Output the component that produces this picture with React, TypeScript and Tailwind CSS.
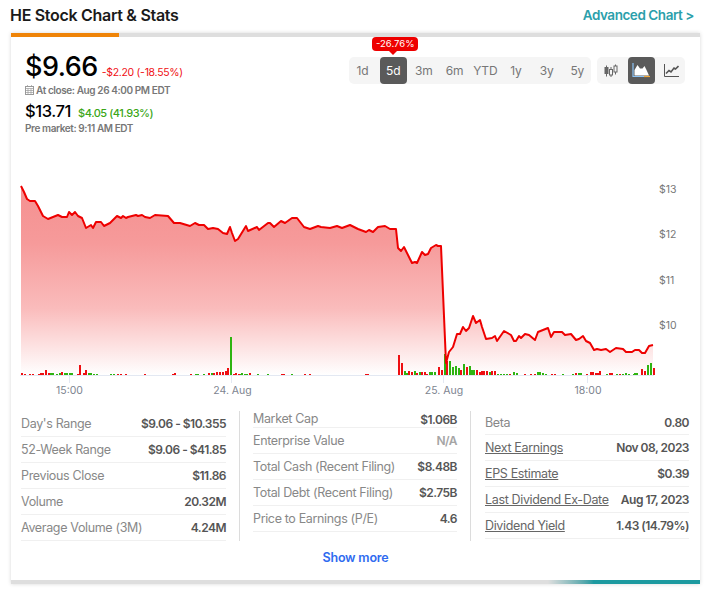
import React from "react";

const linePts =
  "21,186 24,192 27,199 30,201 35,201 38,206 43,216 48,219 53,217 58,215 62,217 67,217 69,212 72,215 75,212 78,216 82,218 86,228 91,225 93,228 96,222 101,222 104,226 110,223 117,216 121,218 123,216 126,218 128,217 136,215 138,216 142,215 145,217 150,218 155,215 168,216 174,223 180,223 190,226 195,223 199,225 204,225 208,229 213,228 218,229 223,233 227,234 230,227 232,233 235,241 238,239 246,226 248,231 257,227 259,230 268,223 270,223 274,227 281,221 285,223 292,218 297,218 304,227 310,229 318,226 321,227 330,228 337,226 342,228 350,225 358,229 366,232 369,230 373,232 378,227 385,226 390,229 396,229 398,248 401,251 404,247 412,263 415,262 417,263 422,252 425,255 428,254 431,248 436,245 438,246 441,246 446,363 449,352 453,347 457,334 460,334 463,327 466,331 469,328 473,316 476,323 480,320 482,327 486,339 492,338 495,336 497,341 504,331 511,335 514,341 516,341 519,336 521,338 525,334 529,335 535,340 538,332 548,328 551,337 554,332 562,332 565,335 571,334 576,340 579,339 583,336 586,341 590,343 594,350 597,349 601,350 606,349 610,352 616,348 623,349 626,352 632,352 635,350 639,350 642,353 645,353 649,346 653,345";

// [x, height, 1 = green]
const volumes: [number, number, number][] = [
  [21, 2, 0], [24, 1, 0], [29, 1, 0], [32, 1, 0], [38, 1, 0], [40, 2, 0], [42, 2, 0], [45, 5, 0], [48, 2, 0], [50, 2, 1], [52, 2, 1],
  [56, 1, 1], [59, 2, 1], [61, 3, 0], [64, 2, 1], [66, 2, 1], [69, 2, 1], [71, 2, 1], [77, 1, 0], [79, 10, 0], [83, 2, 0], [85, 5, 0], [88, 2, 1], [90, 2, 1], [93, 1, 1], [96, 1, 1],
  [110, 1, 1], [113, 1, 1], [117, 1, 0], [120, 1, 0], [125, 1, 0], [144, 1, 0], [172, 1, 0], [174, 2, 0], [190, 1, 0], [195, 1, 1], [197, 1, 1], [203, 1, 1],
  [208, 2, 0], [211, 2, 1], [213, 2, 0], [216, 3, 0], [219, 3, 0], [222, 3, 0], [225, 4, 0], [227, 7, 0], [230, 38, 1], [233, 1, 0], [235, 2, 0], [238, 1, 0],
  [240, 1, 1], [241, 2, 1], [244, 1, 1], [246, 1, 1], [249, 2, 0], [257, 1, 1], [267, 1, 1], [281, 1, 0], [283, 1, 0], [291, 1, 1], [304, 1, 0], [309, 1, 0], [365, 1, 0], [367, 1, 0],
  [398, 20, 0], [401, 12, 0], [404, 4, 1], [406, 2, 1], [408, 4, 0], [411, 3, 0], [414, 4, 1], [416, 2, 0], [419, 3, 1], [421, 3, 0], [424, 3, 0], [426, 1, 0], [429, 3, 1], [431, 3, 1], [434, 3, 1], [438, 8, 0], [441, 5, 0],
  [444, 21, 1], [446, 14, 0], [449, 14, 1], [452, 8, 1], [455, 9, 1], [458, 7, 1], [460, 5, 0], [463, 11, 1], [466, 8, 0], [469, 9, 1],
  [471, 5, 1], [473, 5, 1], [476, 5, 0], [479, 3, 0], [481, 4, 0], [483, 4, 0], [486, 4, 0], [489, 3, 1], [491, 4, 0], [494, 4, 0], [497, 1, 1], [500, 1, 1], [503, 1, 1], [506, 1, 1], [509, 1, 0], [513, 3, 1], [516, 2, 1],
  [524, 1, 0], [530, 1, 0], [534, 1, 0], [537, 3, 1], [539, 3, 1], [542, 2, 1], [545, 1, 1], [551, 1, 0], [554, 1, 0], [562, 1, 1], [572, 1, 1], [575, 2, 0], [578, 2, 1], [580, 2, 1], [586, 1, 0],
  [590, 3, 0], [592, 3, 0], [595, 2, 0], [597, 2, 0], [599, 4, 0], [606, 1, 1], [609, 2, 0], [611, 2, 0], [616, 1, 1], [619, 1, 0], [622, 1, 1], [625, 2, 1], [628, 1, 1], [633, 1, 1], [634, 2, 1], [636, 2, 1],
  [641, 6, 0], [644, 4, 0], [647, 10, 1], [650, 12, 1], [653, 7, 0],
];

type Stat = { label: string; value: string; link?: boolean; muted?: boolean };

const col1: Stat[] = [
  { label: "Day's Range", value: "$9.06 - $10.355" },
  { label: "52-Week Range", value: "$9.06 - $41.85" },
  { label: "Previous Close", value: "$11.86" },
  { label: "Volume", value: "20.32M" },
  { label: "Average Volume (3M)", value: "4.24M" },
];
const col2: Stat[] = [
  { label: "Market Cap", value: "$1.06B" },
  { label: "Enterprise Value", value: "N/A", muted: true },
  { label: "Total Cash (Recent Filing)", value: "$8.48B" },
  { label: "Total Debt (Recent Filing)", value: "$2.75B" },
  { label: "Price to Earnings (P/E)", value: "4.6" },
];
const col3: Stat[] = [
  { label: "Beta", value: "0.80" },
  { label: "Next Earnings", value: "Nov 08, 2023", link: true },
  { label: "EPS Estimate", value: "$0.39", link: true },
  { label: "Last Dividend Ex-Date", value: "Aug 17, 2023", link: true },
  { label: "Dividend Yield", value: "1.43 (14.79%)", link: true },
];

const ranges = ["1d", "5d", "3m", "6m", "YTD", "1y", "3y", "5y"];

function StatRows({ rows, firstRow }: { rows: Stat[]; firstRow: string }) {
  return (
    <>
      {rows.map((row, i) => (
        <div
          key={row.label}
          className={`flex items-center justify-between whitespace-nowrap border-b border-[#f0f0f0] pt-[1px] ${i === 0 ? firstRow : "h-[26px]"}`}
        >
          <span className={`text-[12.5px] tracking-[-0.35px] ${row.link ? "text-[#666] underline" : "text-[#888]"}`}>{row.label}</span>
          <span className={`text-[12px] font-semibold tracking-[-0.5px] ${row.muted ? "text-[#a5a5a5]" : "text-[#555]"}`}>{row.value}</span>
        </div>
      ))}
    </>
  );
}

function CandleIcon({ color }: { color: string }) {
  return (
    <svg width="14" height="14" viewBox="0 0 14 14" fill="none" stroke={color}>
      <path d="M2.5 1.5v11M7 3v10M11.5 0.5v10" strokeWidth="1" />
      <rect x="1" y="3.5" width="3" height="6" fill={color} />
      <rect x="5.5" y="5.5" width="3" height="5.5" fill="#f5f5f5" />
      <rect x="10" y="2" width="3" height="6" fill="#f5f5f5" />
    </svg>
  );
}

function AreaIcon() {
  return (
    <svg width="19" height="15" viewBox="0 0 19 15" fill="none">
      <path d="M2.5 12.5V7L5.5 2l2.5 3.5H10.5L12.5 3l2 4 2.5 5.5z" fill="#fff" />
      <path d="M1 0v13.5h11" stroke="#8cc4f5" strokeWidth="1.2" />
      <path d="M12 13.5h6" stroke="#f0a83c" strokeWidth="1.2" />
    </svg>
  );
}

function LineIcon() {
  return (
    <svg width="15" height="13" viewBox="0 0 15 13" fill="none" stroke="#555">
      <path d="M0.5 0v12.5H15" strokeWidth="1" />
      <path d="M2 9.5l3-3 2 1.5 3-4 1.5 1L14.5 2" strokeWidth="1.6" />
    </svg>
  );
}

function CalendarIcon() {
  return (
    <svg width="9" height="10" viewBox="0 0 9 10" fill="none" stroke="#999">
      <rect x="0.5" y="1.5" width="8" height="8" />
      <path d="M0.5 3.5h8M2.5 0v2M6.5 0v2M0.5 5.5h8M0.5 7.5h8M3 3.5v6M6 3.5v6" strokeWidth="0.7" />
    </svg>
  );
}

function Chart() {
  const area = `21,375 ${linePts} 653,375`;
  return (
    <svg width="689" height="250" viewBox="11 150 689 250" className="block">
      <defs>
        <linearGradient id="areaFill" gradientUnits="userSpaceOnUse" x1="0" y1="186" x2="0" y2="375">
          <stop offset="0" stopColor="#f59090" />
          <stop offset="0.3" stopColor="#f69a9a" />
          <stop offset="0.65" stopColor="#fabcbc" />
          <stop offset="1" stopColor="#ffffff" />
        </linearGradient>
      </defs>
      <polygon points={area} fill="url(#areaFill)" />
      {volumes.map(([x, h, up]) => (
        <rect key={x} x={x} y={375 - h} width="2" height={h} fill={up ? "#2eb411" : "#ee0f12"} />
      ))}
      <path d="M20 375.5h634" stroke="#e3e8f2" />
      <path d="M69.5 375v8M231.5 375v8M443.5 375v8M587.5 375v8" stroke="#e3e8f2" />
      <polyline points={linePts} fill="none" stroke="#ee0000" strokeWidth="2" strokeLinejoin="round" />
      <g fill="#7d8490" fontSize="10.5" textAnchor="middle">
        <text x="69.5" y="393.5">15:00</text>
        <text x="232.5" y="393.5">24. Aug</text>
        <text x="444" y="393.5">25. Aug</text>
        <text x="588" y="393.5">18:00</text>
      </g>
      <g fill="#777" fontSize="10.5">
        <text x="659" y="193">$13</text>
        <text x="659" y="238">$12</text>
        <text x="659" y="284">$11</text>
        <text x="659" y="329">$10</text>
      </g>
    </svg>
  );
}

export default function App() {
  return (
    <div className="w-[709px] h-[589px] overflow-hidden bg-white font-['Inter',sans-serif]">
      <div className="flex h-[33px] items-start justify-between pl-[10px] pr-[15px] pt-[4px]">
        <h1 className="text-[16px] font-semibold leading-[22px] tracking-[-0.3px] text-[#1a1a1a]">HE Stock Chart &amp; Stats</h1>
        <a className="text-[13.5px] font-semibold leading-[22px] tracking-[-0.45px] text-[#2b9fab]">Advanced Chart &gt;</a>
      </div>

      <div className="ml-[11px] w-[689px] bg-white shadow-[0_0_4px_rgba(0,0,0,0.16)]">
        <div className="flex h-[4px] bg-[#dedede]">
          <div className="w-[108px] bg-[#ef8408]" />
        </div>

        <div className="relative h-[113px]">
          <div className="pl-[14px] pt-[15px]">
            <div className="flex items-baseline gap-[4px]">
              <span className="text-[27px] font-medium leading-[30px] tracking-[-0.5px] text-black">$9.66</span>
              <span className="text-[10.5px] tracking-[-0.3px] text-[#f00f14]">-$2.20 (-18.55%)</span>
            </div>
            <div className="mt-[1px] flex items-center gap-[2px] text-[10px] font-semibold leading-[14px] tracking-[-0.4px] text-[#777]">
              <CalendarIcon />
              <span>At close: Aug 26 4:00 PM EDT</span>
            </div>
            <div className="mt-[3px] flex items-baseline gap-[7px]">
              <span className="text-[16.5px] font-medium leading-[22px] tracking-[-0.4px] text-black">$13.71</span>
              <span className="text-[11px] font-medium tracking-[-0.45px] text-[#3aa617]">$4.05 (41.93%)</span>
            </div>
            <div className="-mt-[1px] text-[10px] font-semibold leading-[14px] tracking-[-0.4px] text-[#777]">Pre market: 9:11 AM EDT</div>
          </div>

          <div className="absolute left-[361px] top-[0px] rounded-[4px] bg-[#ee0000] px-[4px] text-[9.5px] leading-[14px] text-white">
            -26.76%
            <span className="absolute left-[17px] top-[14px] h-0 w-0 border-x-[4px] border-t-[4px] border-x-transparent border-t-[#ee0000]" />
          </div>

          <div className="absolute left-[338px] top-[20px] flex gap-[3.7px] rounded-[5px] bg-[#f5f5f5] text-[12px] tracking-[-0.2px] text-[#777]">
            {ranges.map((r) => (
              <div
                key={r}
                className={`flex h-[27px] w-[27px] items-center justify-center rounded-[4px] ${r === "5d" ? "bg-[#5a5a5a] text-white" : ""}`}
              >
                {r}
              </div>
            ))}
          </div>

          <div className="absolute left-[586px] top-[20px] flex gap-[3.7px] rounded-[5px] bg-[#f5f5f5]">
            <div className="flex h-[27px] w-[27px] items-center justify-center rounded-[4px]">
              <CandleIcon color="#666" />
            </div>
            <div className="flex h-[27px] w-[27px] items-center justify-center rounded-[4px] bg-[#5a5a5a]">
              <AreaIcon />
            </div>
            <div className="flex h-[27px] w-[27px] items-center justify-center rounded-[4px]">
              <LineIcon />
            </div>
          </div>
        </div>

        <Chart />

        <div className="mt-[11px] flex pl-[10px]">
          <div className="w-[205px]">
            <StatRows rows={col1} firstRow="h-[26px]" />
          </div>
          <div className="ml-[13px] h-[130px] border-l border-[#dcdcdc] pl-[13px] pr-[13px]">
            <div className="w-[204px]">
              <StatRows rows={col2} firstRow="h-[17px]" />
            </div>
          </div>
          <div className="h-[130px] border-l border-[#dcdcdc] pl-[14px]">
            <div className="w-[204px]">
              <StatRows rows={col3} firstRow="h-[24px]" />
            </div>
          </div>
        </div>

        <div className="flex h-[39px] items-center justify-center pb-[5px]">
          <a className="text-[12.5px] font-semibold tracking-[-0.2px] text-[#2f6bf0]">Show more</a>
        </div>

        <div className="flex h-[4px] bg-[#dedede]">
          <div className="ml-auto w-[152px] bg-gradient-to-r from-[#dedede] via-[#1d9aa0] via-30% to-[#1d9aa0]" />
        </div>
      </div>
    </div>
  );
}
